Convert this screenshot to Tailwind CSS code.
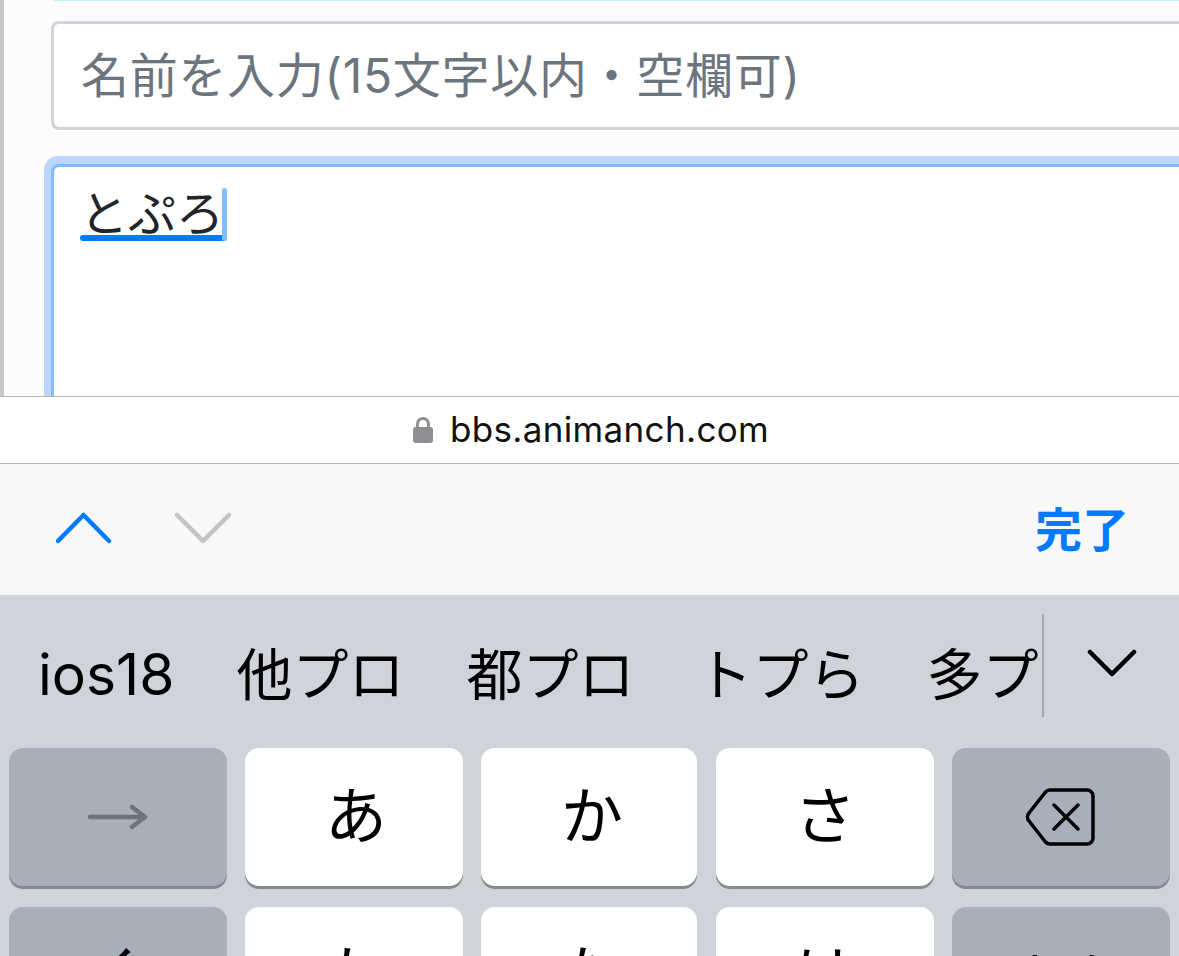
<!DOCTYPE html>
<html>
<head>
    <meta charset="UTF-8">
    <meta name="viewport" content="width=device-width, initial-scale=1.0">
    <title>bbs.animanch.com</title>
    <script src="https://cdn.jsdelivr.net/npm/@tailwindcss/browser@4"></script>
</head>
<body class="w-[1179px] h-[956px] overflow-hidden flex flex-col bg-[#d0d3da] font-['Inter','Noto_Sans_CJK_JP',sans-serif]">
    <!-- page behind the keyboard -->
    <main class="h-[396px] shrink-0 overflow-hidden flex bg-[#fdfbfb]">
        <div class="w-[4px] shrink-0 bg-[#c8c8c8]"></div>
        <div class="flex-1 min-w-0">
            <div class="h-px ml-[50px] bg-[#c4f1f9]"></div>
            <div class="ml-[47px] mt-[20px] h-[109px] -mr-4 bg-white border-[3px] border-[#ced4da] rounded-[8px] pl-[27px] flex items-center">
                <span class="text-[48px] leading-none text-[#6c757d] tracking-[0.7px]">名前を入力(15文字以内・空欄可)</span>
            </div>
            <div class="ml-[40px] mt-[26px] h-[300px] -mr-4 bg-[#bcd6fb] rounded-t-[14px] pl-[7px] pt-[8px]">
                <div class="h-full bg-white border-[3px] border-b-0 border-[#80bdff] rounded-t-[8px] pl-[26px] pt-[21px]">
                    <div class="relative inline-block text-[48px] leading-[52px] text-[#212529]">
                        とぷろ
                        <div class="absolute left-0 right-[-3px] bottom-[-1px] h-[6px] rounded-full bg-[#007aff]"></div>
                        <div class="absolute right-[-3px] top-0 bottom-[-1px] w-[5px] rounded-full bg-[#80bdff]"></div>
                    </div>
                </div>
            </div>
        </div>
    </main>

    <!-- safari address bar -->
    <div class="h-[68px] shrink-0 bg-white border-y border-[#b4b4b4] flex items-center justify-center gap-[17px] pl-[3px]">
        <svg width="20" height="28" viewBox="0 0 20 28">
            <path d="M4.5 13V8a5.500 5.500 0 0 1 11 0v5" fill="none" stroke="#8e8e93" stroke-width="3"/>
            <rect x="0" y="11" width="20" height="16" rx="3" fill="#8e8e93"/>
        </svg>
        <span class="text-[35px] leading-none text-[#111] tracking-[0.35px] -mt-[2px]">bbs.animanch.com</span>
    </div>

    <!-- form accessory bar -->
    <div class="h-[131px] shrink-0 bg-[#f8f8f8] flex items-center justify-between pl-[56px] pr-[50px]">
        <div class="flex items-center gap-[63px] -mt-[4px]">
            <svg width="56" height="32" viewBox="0 0 56 32" fill="none" stroke-width="4.500" stroke-linecap="round" stroke-linejoin="round">
                <path d="M2 29 27.500 3 53 29" stroke="#007aff"/>
            </svg>
            <svg width="56" height="32" viewBox="0 0 56 32" fill="none" stroke-width="4.500" stroke-linecap="round" stroke-linejoin="round">
                <path d="M2 3 28 29 54 3" stroke="#c4c4c4"/>
            </svg>
        </div>
        <span class="text-[47px] leading-none font-semibold text-[#007aff]">完了</span>
    </div>

    <!-- keyboard -->
    <div class="flex-1 min-h-0 overflow-hidden">
        <div class="h-[153px] flex items-center relative text-[56px] leading-none text-black">
            <div class="w-[1042px] shrink-0 flex items-center overflow-hidden pl-[38px] gap-[62px] pt-[18px] h-[103px] mb-[12px]">
                <span class="shrink-0 text-[57px]">ios18</span>
                <span class="shrink-0">他プロ</span>
                <span class="shrink-0">都プロ</span>
                <span class="shrink-0">トプら</span>
                <span class="shrink-0">多プ</span>
            </div>
            <div class="w-[2px] h-[103px] bg-[#a3a5a9] mb-[12px]"></div>
            <div class="w-[135px] shrink-0 flex justify-center pb-[16px]">
                <svg width="50" height="30" viewBox="0 0 50 30" fill="none" stroke="#000" stroke-width="4.500" stroke-linecap="round" stroke-linejoin="round">
                    <path d="M3 3 25 25 47 3"/>
                </svg>
            </div>
        </div>
        <div class="grid grid-cols-[218px_218px_217px_218px_218px] gap-x-[18px] gap-y-[21px] pl-[9px] text-[62px] leading-none text-black">
            <div class="h-[138px] rounded-[14px] bg-[#a9afba] shadow-[0_3px_0_#88898d] flex items-center justify-center">
                <svg width="62" height="26" viewBox="0 0 62 26" fill="none" stroke="#6f737a" stroke-width="4.500" stroke-linecap="round" stroke-linejoin="round">
                    <path d="M3 13H58M45 3 58 13 45 23"/>
                </svg>
            </div>
            <div class="h-[138px] rounded-[14px] bg-white shadow-[0_3px_0_#88898d] flex items-center justify-center pl-[4px]">あ</div>
            <div class="h-[138px] w-[216px] rounded-[14px] bg-white shadow-[0_3px_0_#88898d] flex items-center justify-center pl-[6px]">か</div>
            <div class="h-[138px] rounded-[14px] bg-white shadow-[0_3px_0_#88898d] flex items-center justify-center">さ</div>
            <div class="h-[138px] rounded-[14px] bg-[#a9afba] shadow-[0_3px_0_#88898d] flex items-center justify-center">
                <svg width="72" height="60" viewBox="0 0 72 60" fill="none" stroke="#000" stroke-width="3.500" stroke-linecap="round" stroke-linejoin="round">
                    <path d="M25 3H62a6 6 0 0 1 6 6V51a6 6 0 0 1-6 6H25a6 6 0 0 1-4.500-2L4 34a6 6 0 0 1 0-8L20.500 5A6 6 0 0 1 25 3Z"/>
                    <path d="M29 18 53 42M53 18 29 42"/>
                </svg>
            </div>
            <div class="h-[138px] rounded-[14px] bg-[#a9afba] flex items-center justify-center">く</div>
            <div class="h-[138px] rounded-[14px] bg-white flex items-center justify-center">た</div>
            <div class="h-[138px] w-[216px] rounded-[14px] bg-white flex items-center justify-center">な</div>
            <div class="h-[138px] rounded-[14px] bg-white flex items-center justify-center">は</div>
            <div class="h-[138px] rounded-[14px] bg-[#a9afba] flex items-center justify-center text-[58px] pt-[14px] pl-[6px]">空白</div>
        </div>
    </div>
</body>
</html>
